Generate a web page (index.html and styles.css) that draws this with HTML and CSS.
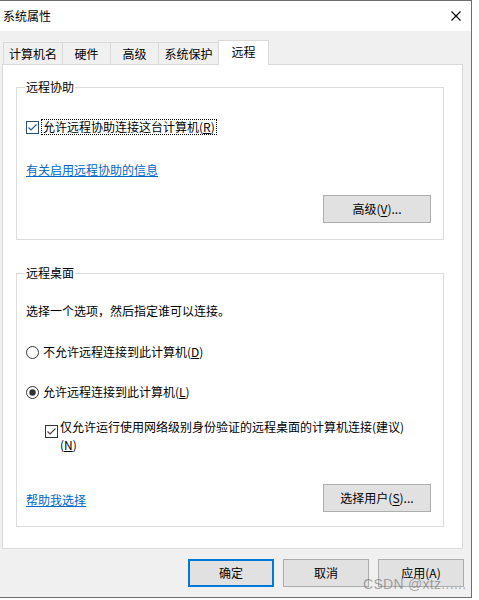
FILE: index.html
```html
<!DOCTYPE html>
<html lang="zh-CN">
<head>
<meta charset="utf-8">
<title>系统属性</title>
<link rel="stylesheet" href="styles.css">
</head>
<body>
<div class="window">
  <div class="titlebar">
    <span class="title">系统属性</span>
    <svg class="close" width="10" height="10" viewBox="0 0 10 10"><path d="M0.5 0.5 L9.5 9.5 M9.5 0.5 L0.5 9.5" stroke="#000" stroke-width="1.1" fill="none"/></svg>
  </div>
  <div class="client">
    <div class="tabs">
      <div class="tab t1">计算机名</div>
      <div class="tab t2">硬件</div>
      <div class="tab t3">高级</div>
      <div class="tab t4">系统保护</div>
      <div class="tab t5 active">远程</div>
    </div>
    <div class="panel">
      <fieldset class="group g1">
        <legend>远程协助</legend>
        <div class="row check-row">
          <svg class="box" width="13" height="13" viewBox="0 0 13 13"><rect x="0.5" y="0.5" width="12" height="12" fill="#fff" stroke="#2a4d78"/><path d="M2.5 6.5 L5 9 L10.5 3.5" stroke="#2a5a90" stroke-width="1.2" fill="none"/></svg>
          <span class="focus">允许远程协助连接这台计算机(<u>R</u>)</span>
        </div>
        <a class="link link1" href="#">有关启用远程协助的信息</a>
        <div class="btn-row">
          <button class="btn">高级(<u>V</u>)...</button>
        </div>
      </fieldset>
      <fieldset class="group g2">
        <legend>远程桌面</legend>
        <p class="desc">选择一个选项，然后指定谁可以连接。</p>
        <div class="row radio-row r1">
          <svg class="radio" width="13" height="13" viewBox="0 0 13 13"><circle cx="6.5" cy="6.5" r="6" fill="#fff" stroke="#333"/></svg>
          <span>不允许远程连接到此计算机(<u>D</u>)</span>
        </div>
        <div class="row radio-row r2">
          <svg class="radio" width="13" height="13" viewBox="0 0 13 13"><circle cx="6.5" cy="6.5" r="6" fill="#fff" stroke="#333"/><circle cx="6.5" cy="6.5" r="3.2" fill="#333"/></svg>
          <span>允许远程连接到此计算机(<u>L</u>)</span>
        </div>
        <div class="nla">
          <svg class="box" width="13" height="13" viewBox="0 0 13 13"><rect x="0.5" y="0.5" width="12" height="12" fill="#fff" stroke="#333"/><path d="M2.5 6.5 L5 9 L10.5 3.5" stroke="#444" stroke-width="1.1" fill="none"/></svg>
          <span class="nla-text">仅允许运行使用网络级别身份验证的远程桌面的计算机连接(建议)<br>(<u>N</u>)</span>
        </div>
        <div class="bottom-row">
          <a class="link" href="#">帮助我选择</a>
          <button class="btn">选择用户(<u>S</u>)...</button>
        </div>
      </fieldset>
    </div>
    <div class="footer">
      <button class="btn fbtn default">确定</button>
      <button class="btn fbtn">取消</button>
      <button class="btn fbtn">应用(A)</button>
    </div>
  </div>
  <div class="watermark">CSDN @xtz......</div>
</div>
</body>
</html>
```
FILE: styles.css
```css
* { box-sizing: border-box; }
html, body { margin: 0; padding: 0; background: #fff; }
body {
  font-family: "Noto Sans CJK SC", "Microsoft YaHei", sans-serif;
  font-size: 12px;
  color: #000;
}
.window {
  position: relative;
  width: 472px;
  height: 598px;
  border-top: 1px solid #6d6d6d;
  border-right: 1px solid #6d6d6d;
  border-bottom: 1px solid #6d6d6d;
  display: flex;
  flex-direction: column;
}
.titlebar {
  height: 30px;
  background: #fff;
  display: flex;
  align-items: center;
  justify-content: space-between;
  padding: 0 10px 0 3px;
  flex: none;
}
.title { line-height: 16px; }
.close { display: block; }
.client {
  flex: 1;
  background: #f0f0f0;
  display: flex;
  flex-direction: column;
}
.tabs {
  margin-top: 9px;
  padding-left: 3px;
  height: 24px;
  display: flex;
  align-items: flex-end;
  position: relative;
  z-index: 2;
}
.tab {
  height: 22px;
  border: 1px solid #d9d9d9;
  border-bottom: none;
  background: #f0f0f0;
  display: flex;
  align-items: center;
  justify-content: center;
  line-height: 16px;
  margin-left: -1px;
}
.t1 { width: 60px; margin-left: 0; }
.t2 { width: 49px; }
.t3 { width: 49px; }
.t4 { width: 61px; }
.t5 { width: 51px; }
.tab.active {
  height: 25px;
  background: #fff;
  margin-bottom: -1px;
  padding-bottom: 2px;
}
.panel {
  margin-left: 2px;
  width: 461px;
  height: 485px;
  background: #fff;
  border: 1px solid #d9d9d9;
  padding: 14px 18px 0 13px;
  flex: none;
}
.group {
  margin: 0;
  border: 1px solid #dcdcdc;
  padding: 0 12px 0 9px;
  min-width: 0;
}
.group legend {
  line-height: 16px;
  padding: 0 1px;
  margin-left: -1px;
}
.g2 { margin-top: 25px; }
.row {
  display: flex;
  align-items: center;
  line-height: 16px;
}
.box, .radio { display: block; flex: none; }
.check-row { margin-top: 24px; height: 16px; }
.check-row .box { margin-right: 2px; }
.focus {
  border: 1px dotted #000;
  line-height: 14px;
  padding: 0 1px;
}
.link {
  display: inline-block;
  color: #0066cc;
  text-decoration: underline;
  line-height: 16px;
}
.link1 { margin-top: 27px; }
.btn-row {
  display: flex;
  justify-content: flex-end;
  margin-top: 17px;
  padding-bottom: 16px;
}
.btn {
  font-family: inherit;
  font-size: 12px;
  color: #000;
  width: 108px;
  height: 28px;
  background: #e1e1e1;
  border: 1px solid #adadad;
  padding: 0;
  line-height: 16px;
}
.btn u { text-underline-offset: 2px; }
.desc { margin: 22px 0 0; line-height: 16px; }
.radio-row span { margin-left: 4px; }
.r1 { margin-top: 25px; }
.r2 { margin-top: 24px; }
.nla {
  display: flex;
  align-items: flex-start;
  margin-top: 18px;
  padding-left: 19px;
}
.nla .box { margin-top: 7px; margin-right: 2px; }
.nla-text { line-height: 18px; }
.bottom-row {
  display: flex;
  justify-content: space-between;
  align-items: center;
  margin-top: 30px;
  padding-bottom: 14px;
}
.bottom-row .link { margin-top: 4px; }
.footer {
  display: flex;
  justify-content: flex-end;
  gap: 9px;
  margin-top: 10px;
  padding-right: 7px;
}
.fbtn { width: 86px; }
.fbtn.default { border: 2px solid #0078d7; }
.watermark {
  position: absolute;
  left: 363px;
  top: 575px;
  font-family: "Liberation Sans", Arial, sans-serif;
  font-size: 14px;
  color: rgba(110, 110, 110, 0.6);
  letter-spacing: 0.3px;
  pointer-events: none;
}
```
